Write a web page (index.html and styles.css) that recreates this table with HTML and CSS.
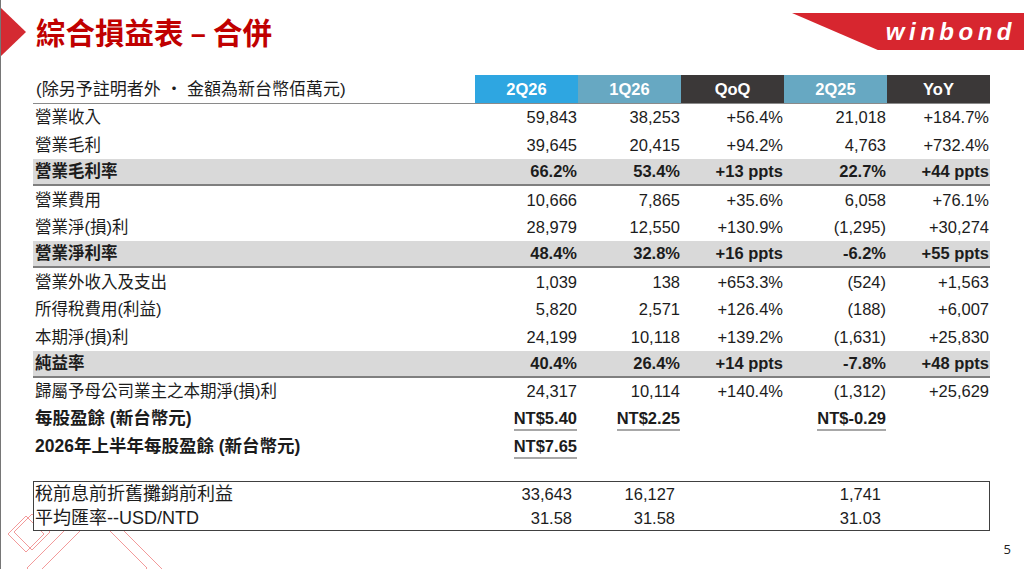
FILE: index.html
```html
<!DOCTYPE html>
<html lang="zh-Hant">
<head>
<meta charset="utf-8">
<title>綜合損益表 – 合併</title>
<link rel="stylesheet" href="styles.css">
</head>
<body>
<div class="slide">
  <header class="top">
    <div class="brand">
      <span class="marker"></span>
      <h1 class="title">綜合損益表 – 合併</h1>
    </div>
    <div class="logo"><span class="logo-text">winbond</span></div>
  </header>

  <div class="table">
    <div class="row head">
      <div class="cell label note">(除另予註明者外 ・ 金額為新台幣佰萬元)</div>
      <div class="cell hd blue">2Q26</div>
      <div class="cell hd teal">1Q26</div>
      <div class="cell hd dark">QoQ</div>
      <div class="cell hd teal">2Q25</div>
      <div class="cell hd dark">YoY</div>
    </div>
    <div class="row">
      <div class="cell label">營業收入</div>
      <div class="cell num">59,843</div><div class="cell num">38,253</div><div class="cell num">+56.4%</div><div class="cell num">21,018</div><div class="cell num">+184.7%</div>
    </div>
    <div class="row">
      <div class="cell label">營業毛利</div>
      <div class="cell num">39,645</div><div class="cell num">20,415</div><div class="cell num">+94.2%</div><div class="cell num">4,763</div><div class="cell num">+732.4%</div>
    </div>
    <div class="row band">
      <div class="cell label">營業毛利率</div>
      <div class="cell num">66.2%</div><div class="cell num">53.4%</div><div class="cell num">+13 ppts</div><div class="cell num">22.7%</div><div class="cell num">+44 ppts</div>
    </div>
    <div class="row">
      <div class="cell label">營業費用</div>
      <div class="cell num">10,666</div><div class="cell num">7,865</div><div class="cell num">+35.6%</div><div class="cell num">6,058</div><div class="cell num">+76.1%</div>
    </div>
    <div class="row">
      <div class="cell label">營業淨(損)利</div>
      <div class="cell num">28,979</div><div class="cell num">12,550</div><div class="cell num">+130.9%</div><div class="cell num">(1,295)</div><div class="cell num">+30,274</div>
    </div>
    <div class="row band">
      <div class="cell label">營業淨利率</div>
      <div class="cell num">48.4%</div><div class="cell num">32.8%</div><div class="cell num">+16 ppts</div><div class="cell num">-6.2%</div><div class="cell num">+55 ppts</div>
    </div>
    <div class="row">
      <div class="cell label">營業外收入及支出</div>
      <div class="cell num">1,039</div><div class="cell num">138</div><div class="cell num">+653.3%</div><div class="cell num">(524)</div><div class="cell num">+1,563</div>
    </div>
    <div class="row">
      <div class="cell label">所得稅費用(利益)</div>
      <div class="cell num">5,820</div><div class="cell num">2,571</div><div class="cell num">+126.4%</div><div class="cell num">(188)</div><div class="cell num">+6,007</div>
    </div>
    <div class="row">
      <div class="cell label">本期淨(損)利</div>
      <div class="cell num">24,199</div><div class="cell num">10,118</div><div class="cell num">+139.2%</div><div class="cell num">(1,631)</div><div class="cell num">+25,830</div>
    </div>
    <div class="row band">
      <div class="cell label">純益率</div>
      <div class="cell num">40.4%</div><div class="cell num">26.4%</div><div class="cell num">+14 ppts</div><div class="cell num">-7.8%</div><div class="cell num">+48 ppts</div>
    </div>
    <div class="row">
      <div class="cell label">歸屬予母公司業主之本期淨(損)利</div>
      <div class="cell num">24,317</div><div class="cell num">10,114</div><div class="cell num">+140.4%</div><div class="cell num">(1,312)</div><div class="cell num">+25,629</div>
    </div>
    <div class="row strong">
      <div class="cell label eps-label">每股盈餘 (新台幣元)</div>
      <div class="cell num"><span class="eps">NT$5.40</span></div>
      <div class="cell num"><span class="eps">NT$2.25</span></div>
      <div class="cell num"></div>
      <div class="cell num"><span class="eps">NT$-0.29</span></div>
      <div class="cell num"></div>
    </div>
    <div class="row strong">
      <div class="cell label eps-label">2026年上半年每股盈餘 (新台幣元)</div>
      <div class="cell num"><span class="eps">NT$7.65</span></div>
      <div class="cell num"></div><div class="cell num"></div><div class="cell num"></div><div class="cell num"></div>
    </div>
  </div>

  <div class="box">
    <div class="row boxrow">
      <div class="cell label">稅前息前折舊攤銷前利益</div>
      <div class="cell num">33,643</div><div class="cell num">16,127</div><div class="cell num"></div><div class="cell num">1,741</div><div class="cell num"></div>
    </div>
    <div class="row boxrow">
      <div class="cell label">平均匯率--USD/NTD</div>
      <div class="cell num">31.58</div><div class="cell num">31.58</div><div class="cell num"></div><div class="cell num">31.03</div><div class="cell num"></div>
    </div>
  </div>

  <footer class="foot">5</footer>

  <svg class="deco" width="170" height="80" viewBox="0 489 170 80" xmlns="http://www.w3.org/2000/svg">
    <g fill="none" stroke="#f29a9a" stroke-width="1">
      <polygon points="7,534 25,516 43,534 25,552"/>
      <polygon points="13,532 31,514 49,532 31,550"/>
      <polygon points="86,508 146,568 86,628 26,568"/>
      <polygon points="101,509 161,569 101,629 41,569"/>
    </g>
  </svg>
</div>
</body>
</html>
```

FILE: styles.css
```css
html, body {
  margin: 0;
  padding: 0;
  background: #ffffff;
}

.slide {
  position: relative;
  box-sizing: border-box;
  width: 1024px;
  height: 569px;
  overflow: hidden;
  border-left: 1px solid #767676;
  font-family: "Liberation Sans", "Noto Sans CJK TC", sans-serif;
  color: #1c1c1c;
}

.top {
  display: flex;
  align-items: flex-start;
  height: 75px;
}

.brand {
  display: flex;
  align-items: center;
  height: 64px;
}

.marker {
  width: 0;
  height: 0;
  border-left: 25px solid #d42a32;
  border-top: 24px solid transparent;
  border-bottom: 24px solid transparent;
}

.title {
  margin: 0 0 0 10px;
  font-family: "Noto Sans CJK TC", sans-serif;
  font-size: 29.5px;
  font-weight: 700;
  line-height: 1;
  color: #c00000;
}

.logo {
  margin-left: auto;
  margin-top: 13px;
  width: 232px;
  height: 37px;
  background: #d7262f;
  clip-path: polygon(0 0, 100% 0, 100% 100%, 37% 100%);
  display: flex;
  align-items: center;
  justify-content: flex-end;
  padding-right: 8px;
  box-sizing: border-box;
}

.logo-text {
  font-family: "Liberation Sans", sans-serif;
  font-weight: 700;
  font-style: italic;
  font-size: 24px;
  letter-spacing: 4.5px;
  color: #ffffff;
  line-height: 1;
}

.table {
  position: relative;
  z-index: 1;
  margin-left: 32px;
  width: 957px;
}

.row {
  display: grid;
  grid-template-columns: 442px repeat(5, 103px);
  height: 27.4px;
  box-sizing: border-box;
}

.cell {
  display: flex;
  align-items: center;
  font-size: 16.5px;
  line-height: 1;
  white-space: nowrap;
}

.label {
  padding-left: 2px;
}

.note {
  font-size: 17px;
  padding-left: 3px;
}

.eps-label {
  font-size: 17.5px;
}

.num {
  justify-content: flex-end;
  padding-right: 1px;
}

.head {
  height: 29px;
  border-bottom: 1px solid #8a8a8a;
}

.hd {
  justify-content: center;
  color: #ffffff;
  font-weight: 700;
}

.blue { background: #2ea6e1; }
.teal { background: #67a8c2; }
.dark { background: #3b3838; }

.band {
  background: #d9d9d9;
  border-bottom: 2px solid #7f7f7f;
}

.band .cell { font-weight: 700; }

.strong .cell { font-weight: 700; }

.eps {
  display: inline-block;
  line-height: 17px;
  padding-bottom: 2px;
  border-bottom: 2px solid #a8a8a8;
  margin-top: 4px;
}

.box {
  position: relative;
  z-index: 1;
  margin-left: 32px;
  margin-top: 21px;
  width: 957px;
  box-sizing: border-box;
  border: 1px solid #404040;
  background: #ffffff;
}

.boxrow {
  grid-template-columns: 441px repeat(5, 103px);
  height: 24px;
}

.boxrow .label {
  font-size: 18px;
  padding-left: 1px;
}

.boxrow .num {
  padding-right: 6px;
}

.foot {
  margin-top: 10px;
  padding-right: 13px;
  text-align: right;
  font-family: "Open Sans", sans-serif;
  font-size: 13px;
  line-height: 16px;
  color: #222222;
}

.deco {
  position: absolute;
  left: 0;
  bottom: 0;
  z-index: 0;
}
```
